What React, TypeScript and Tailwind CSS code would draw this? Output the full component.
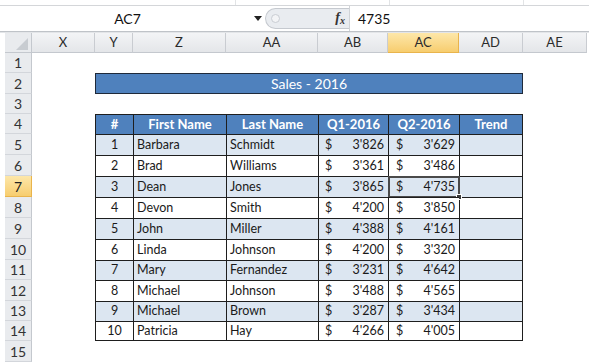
import React from 'react';

const rows = [
  { n: 1, first: 'Barbara', last: 'Schmidt', q1: "3'826", q2: "3'629" },
  { n: 2, first: 'Brad', last: 'Williams', q1: "3'361", q2: "3'486" },
  { n: 3, first: 'Dean', last: 'Jones', q1: "3'865", q2: "4'735" },
  { n: 4, first: 'Devon', last: 'Smith', q1: "4'200", q2: "3'850" },
  { n: 5, first: 'John', last: 'Miller', q1: "4'388", q2: "4'161" },
  { n: 6, first: 'Linda', last: 'Johnson', q1: "4'200", q2: "3'320" },
  { n: 7, first: 'Mary', last: 'Fernandez', q1: "3'231", q2: "4'642" },
  { n: 8, first: 'Michael', last: 'Johnson', q1: "3'488", q2: "4'565" },
  { n: 9, first: 'Michael', last: 'Brown', q1: "3'287", q2: "3'434" },
  { n: 10, first: 'Patricia', last: 'Hay', q1: "4'266", q2: "4'005" },
];

// sheet row heights, rows 1..15
const heights = ['h-[20px]', 'h-[21px]', 'h-[20px]', 'h-[20px]', 'h-[21px]', 'h-[21px]', 'h-[21px]', 'h-[21px]', 'h-[21px]', 'h-[21px]', 'h-[20px]', 'h-[21px]', 'h-[20px]', 'h-[20px]', 'h-[21px]'];

const columns = [
  { name: 'X', w: 'w-[63px]' },
  { name: 'Y', w: 'w-[38px]' },
  { name: 'Z', w: 'w-[93px]' },
  { name: 'AA', w: 'w-[92px]' },
  { name: 'AB', w: 'w-[70px]' },
  { name: 'AC', w: 'w-[71px]', active: true },
  { name: 'AD', w: 'w-[64px]' },
  { name: 'AE', w: 'w-[64px]' },
];

const RowHeader: React.FC<{ n: number; active?: boolean }> = ({ n, active }) => (
  <div
    className={`w-[27px] ml-[5px] shrink-0 flex items-center justify-center border-b border-r text-[14px] ${
      active
        ? 'bg-gradient-to-b from-[#fde7a9] to-[#f7cd6e] border-[#e9b44c] text-[#222]'
        : 'bg-[#e9ebee] border-r-[#c4c8ce] border-b-[#d3d6db] text-[#333]'
    }`}
  >
    {n}
  </div>
);

const DataRow: React.FC<{ r: typeof rows[number]; last: boolean }> = ({ r, last }) => {
  const stripe = r.n % 2 === 1 ? 'bg-[#dce6f1]' : 'bg-white';
  const cell = `h-full border-l border-t border-[#1e1e1e] flex items-center ${stripe} ${last ? 'border-b' : ''}`;
  const selected = r.n === 3;
  return (
    <div className="flex w-[428px] h-full text-[12.5px] text-[#1a1a1a]">
      <div className={`${cell} w-[38px] justify-center`}>{r.n}</div>
      <div className={`${cell} w-[93px] pl-[3px]`}>{r.first}</div>
      <div className={`${cell} w-[92px] pl-[3px]`}>{r.last}</div>
      <div className={`${cell} w-[70px] justify-between pl-[6px] pr-[4px]`}>
        <span>$</span>
        <span>{r.q1}</span>
      </div>
      <div className={`${cell} w-[71px] justify-between pl-[7px] pr-[4px] relative`}>
        <span>$</span>
        <span>{r.q2}</span>
        {selected && (
          <div className="absolute -left-[1px] -top-[1px] -right-[1px] -bottom-[1px] border-2 border-[#4a4a4a]">
            <div className="absolute -right-[4px] -bottom-[4px] w-[6px] h-[6px] bg-[#3a3a3a] border border-white" />
          </div>
        )}
      </div>
      <div className={`${cell} w-[64px] border-r`} />
    </div>
  );
};

export default function App() {
  return (
    <div className="w-[589px] h-[363px] bg-white overflow-hidden font-['Lato',sans-serif] select-none">
      {/* top strip */}
      <div className="h-[6px] border-b border-[#d4d6d9] flex">
        <div className="ml-[235px] w-px h-full bg-[#e2e4e6]" />
        <div className="ml-[153px] w-px h-full bg-[#e2e4e6]" />
        <div className="ml-[133px] w-px h-full bg-[#e2e4e6]" />
      </div>

      {/* formula bar */}
      <div className="h-[25px] flex items-stretch">
        <div className="w-[265px] flex items-center pl-[5px]">
          <div className="w-[245px] text-center text-[14px] text-[#111]">AC7</div>
          <svg width="8" height="5" viewBox="0 0 8 5" className="ml-[4px]">
            <path d="M0 0 L8 0 L4 5 Z" fill="#222" />
          </svg>
        </div>
        <div className="w-[84px] my-[2px] bg-[#e9ecf0] border border-r-0 border-[#c5c9cf] rounded-l-[11px] flex items-center">
          <div className="ml-[5px] w-[9px] h-[9px] rounded-full border border-[#c9cdd3] bg-[#f3f4f6]" />
          <span className="ml-auto mr-[4px] italic font-['Liberation_Serif',serif] text-[14px] font-bold text-[#333] leading-none">
            f<span className="text-[10px] align-[-2px]">x</span>
          </span>
        </div>
        <div className="flex-1 flex items-center pl-[8px] text-[14px] text-[#111] border-l border-[#d0d3d7]">4735</div>
      </div>

      {/* separator */}
      <div className="h-[2px] border-t border-[#bfc3c8] bg-[#e3e5e8]" />

      {/* column headers */}
      <div className="h-[20px] flex text-[13px] text-[#2b2b2b]">
        <div className="w-[27px] ml-[5px] shrink-0 bg-[#e9ebee] border-r border-b border-[#c4c8ce] relative">
          <svg width="12" height="12" viewBox="0 0 12 12" className="absolute right-[3px] bottom-[2px]">
            <path d="M12 0 L12 12 L0 12 Z" fill="#c8ccd1" />
          </svg>
        </div>
        {columns.map((c) => (
          <div
            key={c.name}
            className={`${c.w} shrink-0 flex items-center justify-center border-r border-b ${
              c.active
                ? 'bg-gradient-to-b from-[#fde7a9] to-[#f7cd6e] border-[#e9b44c]'
                : 'bg-gradient-to-b from-[#f3f4f6] to-[#e4e6e9] border-r-[#c9ccd1] border-b-[#c4c8ce]'
            }`}
          >
            {c.name}
          </div>
        ))}
      </div>

      {/* sheet body */}
      {heights.map((h, i) => {
        const rowNo = i + 1;
        const dataIndex = rowNo - 5;
        return (
          <div key={rowNo} className={`${h} flex`}>
            <RowHeader n={rowNo} active={rowNo === 7} />
            <div className="w-[63px] shrink-0" />
            <div className="w-[428px] shrink-0">
              {rowNo === 2 && (
                <div className="h-full border border-[#1f2a3a] bg-[#4f81bd] text-white text-[14px] flex items-center justify-center">
                  Sales - 2016
                </div>
              )}
              {rowNo === 4 && (
                <div className="flex h-full text-[13px] font-bold text-white">
                  <div className="w-[38px] h-full bg-[#4f81bd] border-l border-t border-[#1e1e1e] flex items-center justify-center">#</div>
                  <div className="w-[93px] h-full bg-[#4f81bd] border-l border-t border-[#1e1e1e] flex items-center justify-center">First Name</div>
                  <div className="w-[92px] h-full bg-[#4f81bd] border-l border-t border-[#1e1e1e] flex items-center justify-center">Last Name</div>
                  <div className="w-[70px] h-full bg-[#4f81bd] border-l border-t border-[#1e1e1e] flex items-center justify-center">Q1-2016</div>
                  <div className="w-[71px] h-full bg-[#4f81bd] border-l border-t border-[#1e1e1e] flex items-center justify-center">Q2-2016</div>
                  <div className="w-[64px] h-full bg-[#4f81bd] border-l border-t border-r border-[#1e1e1e] flex items-center justify-center">Trend</div>
                </div>
              )}
              {dataIndex >= 0 && dataIndex < rows.length && (
                <DataRow r={rows[dataIndex]} last={dataIndex === rows.length - 1} />
              )}
            </div>
            <div className="w-[64px] shrink-0" />
          </div>
        );
      })}
    </div>
  );
}
